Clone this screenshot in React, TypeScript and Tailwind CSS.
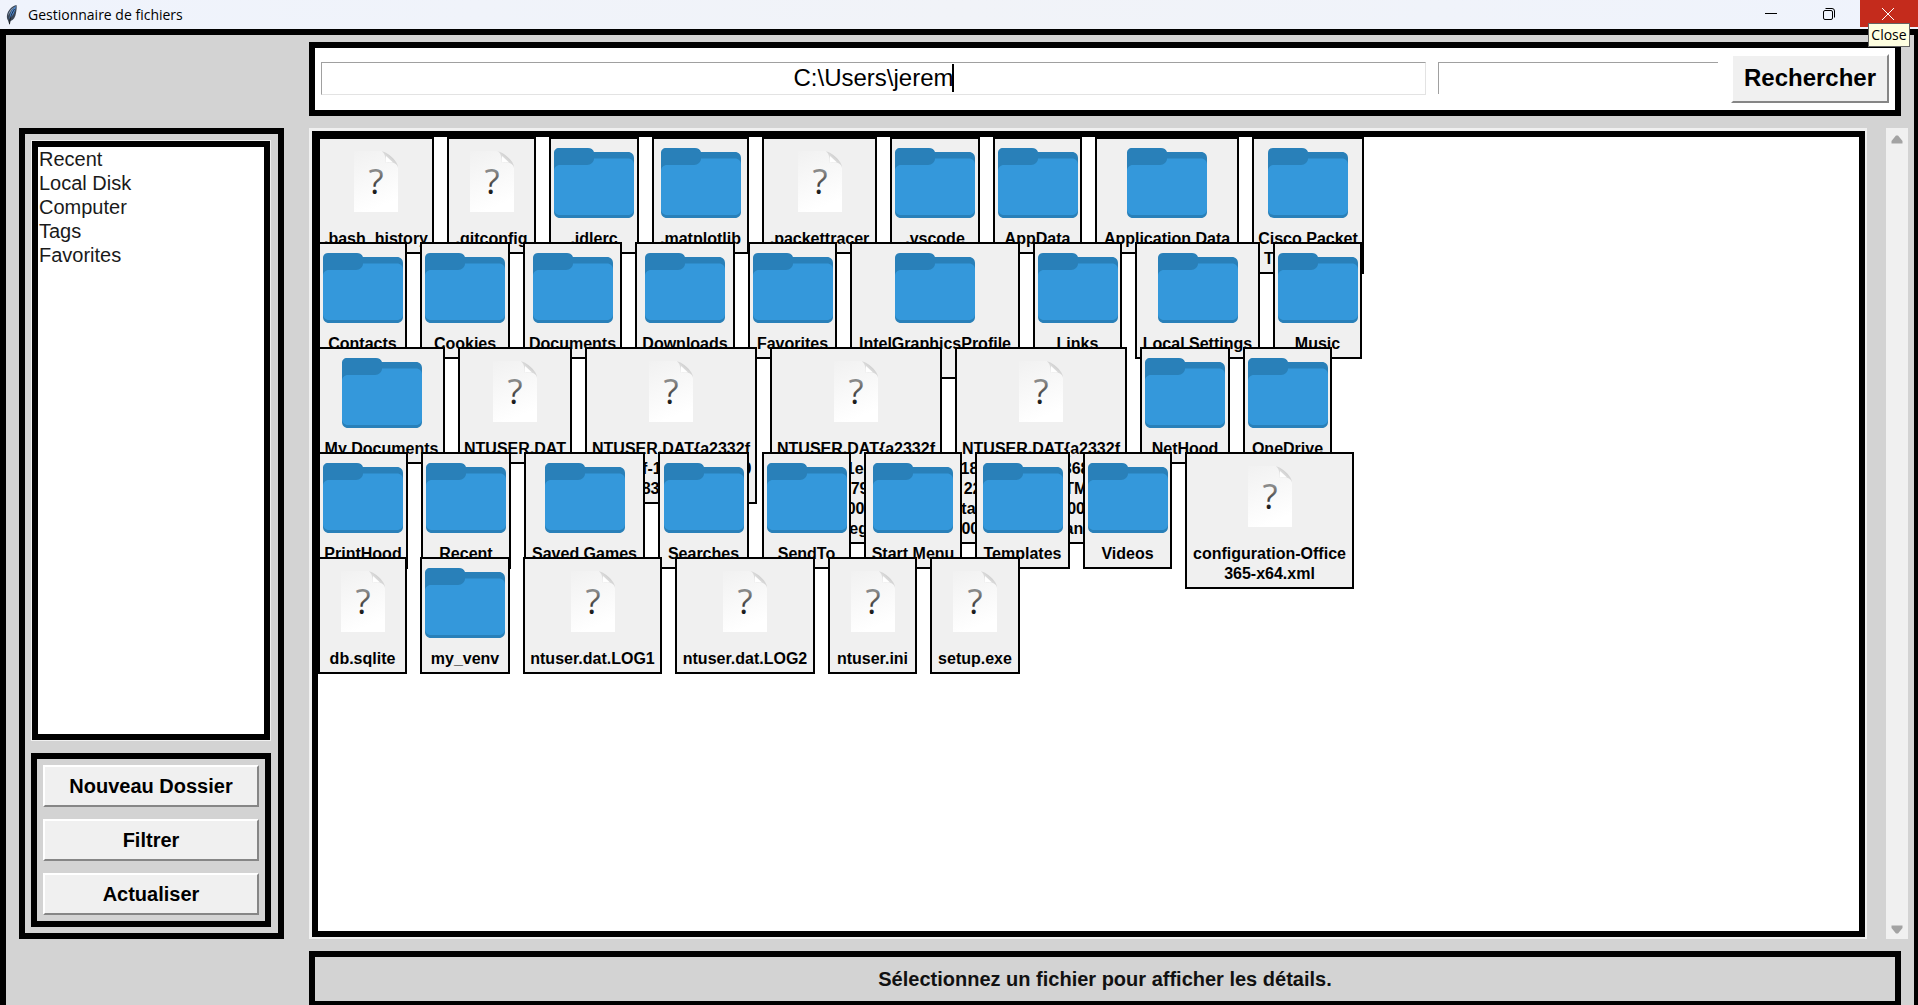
import React, { useState } from "react";

type Kind = "file" | "folder";
type Entry = { kind: Kind; lines: string[]; width: number };

const file = (width: number, ...lines: string[]): Entry => ({ kind: "file", lines, width });
const folder = (width: number, ...lines: string[]): Entry => ({ kind: "folder", lines, width });

const ROWS: Entry[][] = [
  [
    file(116, ".bash_history"),
    file(89, ".gitconfig"),
    folder(90, ".idlerc"),
    folder(97, ".matplotlib"),
    file(115, ".packettracer"),
    folder(90, ".vscode"),
    folder(89, "AppData"),
    folder(144, "Application Data"),
    folder(112, "Cisco Packet", "Tracer 8.2.1"),
  ],
  [
    folder(89, "Contacts"),
    folder(90, "Cookies"),
    folder(99, "Documents"),
    folder(100, "Downloads"),
    folder(89, "Favorites"),
    folder(170, "IntelGraphicsProfile", "s"),
    folder(89, "Links"),
    folder(125, "Local Settings"),
    folder(89, "Music"),
  ],
  [
    folder(127, "My Documents"),
    file(114, "NTUSER.DAT"),
    file(172, "NTUSER.DAT{a2332f", "18-cdbf-11ec-8680-00", "2248483d79}.TM.blf"),
    file(
      172,
      "NTUSER.DAT{a2332f",
      "18-cdbf-11ec-8680-00",
      "2248483d79}.TMCon",
      "tainer0000000000000",
      "0000001.regtrans-ms",
    ),
    file(
      172,
      "NTUSER.DAT{a2332f",
      "18-cdbf-11ec-8680-00",
      "2248483d79}.TMCon",
      "tainer0000000000000",
      "0000002.regtrans-ms",
    ),
    folder(90, "NetHood"),
    folder(89, "OneDrive"),
  ],
  [
    folder(90, "PrintHood"),
    folder(90, "Recent"),
    folder(121, "Saved Games"),
    folder(91, "Searches"),
    folder(89, "SendTo"),
    folder(98, "Start Menu"),
    folder(95, "Templates"),
    folder(89, "Videos"),
    file(169, "configuration-Office", "365-x64.xml"),
  ],
  [
    file(89, "db.sqlite"),
    folder(90, "my_venv"),
    file(139, "ntuser.dat.LOG1"),
    file(140, "ntuser.dat.LOG2"),
    file(89, "ntuser.ini"),
    file(90, "setup.exe"),
  ],
];

const PLACES = ["Recent", "Local Disk", "Computer", "Tags", "Favorites"];
const ACTIONS = ["Nouveau Dossier", "Filtrer", "Actualiser"];

function FolderIcon() {
  return (
    <svg viewBox="0 0 80 80" className="size-20 shrink-0" aria-hidden="true">
      <path
        d="M5 6h29c3 0 5 1.500 6 4h34c3.500 0 6 2.500 6 6v54c0 3.500-2.500 6-6 6H6c-3.500 0-6-2.500-6-6V11c0-3 2-5 5-5z"
        fill="#2980b9"
      />
      <path
        d="M6 23h27c4 0 7-3 7-6.500h34c3.500 0 6 2.500 6 6V67c0 3.500-2.500 6-6 6H6c-3.500 0-6-2.500-6-6V29c0-3.500 2.500-6 6-6z"
        fill="#3498db"
      />
    </svg>
  );
}

function FileIcon() {
  return (
    <svg viewBox="0 0 80 80" className="size-20 shrink-0" aria-hidden="true">
      <defs>
        <linearGradient id="sheet" x1="0" y1="0" x2="0.300" y2="1">
          <stop offset="0" stopColor="#f1f1f1" />
          <stop offset="1" stopColor="#ffffff" />
        </linearGradient>
        <linearGradient id="fold" x1="1" y1="0" x2="0" y2="1">
          <stop offset="0.350" stopColor="#cfcfcf" />
          <stop offset="0.600" stopColor="#e8e8e8" />
          <stop offset="1" stopColor="#ffffff" />
        </linearGradient>
        <linearGradient id="mark" x1="0" y1="0" x2="0" y2="1">
          <stop offset="0.300" stopColor="#8a8a8a" />
          <stop offset="0.800" stopColor="#111111" />
        </linearGradient>
      </defs>
      <path d="M18 9h28c6 2 13 9 16 16v45H18z" fill="url(#sheet)" />
      <path d="M44 9c4 0 6 5 5.500 12 5-2 12 0 12.500 5 1-6-11-17-18-17z" fill="url(#fold)" />
      <path d="M50 14v6.500c3-.6 5-.6 7 .1z" fill="#ffffff" />
      <text
        x="40"
        y="52"
        textAnchor="middle"
        fontSize="35"
        fontWeight="400"
        fill="url(#mark)"
        fontFamily="'Open Sans', 'Noto Sans', sans-serif"
      >
        ?
      </text>
    </svg>
  );
}

function FeatherIcon() {
  return (
    <svg viewBox="0 0 12 20" className="h-5 w-3" aria-hidden="true">
      <path d="M10.500 0C6 1 2 5 1 10c-.3 2 0 4 1 5.500L3.500 20l1-4c3-1 5-4 5.500-8 .5-3 1-6 .5-8z" fill="#3a4656" />
      <path d="M10 1C7 3 4 7 3.500 14c3-3 5.500-7 6.500-13z" fill="#4f8fdc" />
      <path d="M9 1.500C5 3.500 2.500 7 2 11c2-4 4-7 7-9.500z" fill="#8fa3bb" />
      <path d="M8.500 4C6 8 4 12 3.500 19" stroke="#111" strokeWidth="0.8" fill="none" />
    </svg>
  );
}

function TitleBar() {
  return (
    <header className="flex h-[29px] shrink-0 items-start justify-between bg-linear-to-r from-[#eff3fc] via-[#f1f3f8] to-[#eff3fc]">
      <div className="flex h-[29px] items-center gap-[10px] pl-[6px]">
        <FeatherIcon />
        <h1 className="font-['Open_Sans','Noto_Sans',sans-serif] text-[14px] leading-5 text-black">
          Gestionnaire de fichiers
        </h1>
      </div>
      <div className="flex">
        <button
          type="button"
          aria-label="Minimize"
          className="flex h-[27px] w-[58px] items-center justify-center pr-1"
        >
          <svg viewBox="0 0 12 12" className="size-3" aria-hidden="true">
            <path d="M0 5.500h12" stroke="#000" />
          </svg>
        </button>
        <button
          type="button"
          aria-label="Restore"
          className="flex h-[27px] w-[58px] items-center justify-center pr-1"
        >
          <svg viewBox="0 0 12 12" className="size-3" fill="none" stroke="#000" aria-hidden="true">
            <rect x="0.500" y="2.500" width="9" height="9" rx="1.500" />
            <path d="M2.500 .5H9A2.500 2.500 0 0 1 11.500 3v6.500" />
          </svg>
        </button>
        <div className="relative">
          <button
            type="button"
            aria-label="Close"
            className="flex h-[27px] w-[58px] items-center justify-center bg-[#c42b1c] pr-0.5"
          >
            <svg viewBox="0 0 12 12" className="size-3" aria-hidden="true">
              <path d="M0 0l12 12M12 0L0 12" stroke="#fff" />
            </svg>
          </button>
          <div
            role="tooltip"
            className="absolute top-[23px] right-2 z-10 flex h-6 w-[42px] items-center justify-center border border-[#646464] bg-[#ffffe1] font-['Open_Sans','Noto_Sans',sans-serif] text-[14px] leading-5 text-black"
          >
            Close
          </div>
        </div>
      </div>
    </header>
  );
}

const raised =
  "border-2 border-t-white border-l-white border-r-[#868686] border-b-[#868686] bg-[#f0f0f0] font-bold text-black";

function SearchBar() {
  const [path, setPath] = useState("C:\\Users\\jerem");
  return (
    <form
      onSubmit={(e) => e.preventDefault()}
      className="mr-[7px] flex h-[74px] items-center border-6 border-black bg-white px-[6px] pb-0.5"
    >
      <div className="relative mr-3 flex-1">
        <input
          aria-label="Chemin"
          value={path}
          onChange={(e) => setPath(e.target.value)}
          className="block h-[33px] w-full border border-t-[#a0a0a0] border-r-[#e3e3e3] border-b-[#e3e3e3] border-l-[#a0a0a0] text-center text-[24px] leading-7 text-black outline-none"
        />
        <div className="pointer-events-none absolute inset-0 flex items-center justify-center text-[24px]" aria-hidden="true">
          <span className="relative h-7">
            <span className="invisible">{path}</span>
            <span className="absolute top-0 right-0 h-7 w-0.5 bg-black" />
          </span>
        </div>
      </div>
      <input
        aria-label="Recherche"
        className="mr-[13px] h-8 w-[280px] border-t border-l border-[#a0a0a0] px-1 text-[24px] text-black outline-none"
      />
      <button
        type="submit"
        className={`${raised} h-[49px] w-[158px] border-t-[#f4f4f4] border-l-[#f4f4f4] text-[24px] leading-7`}
      >
        Rechercher
      </button>
    </form>
  );
}

function Sidebar() {
  return (
    <aside className="row-start-2 flex flex-col gap-3 border-6 border-black p-[6px] pr-[7px]">
      <div className="flex-1 border border-[#f0f0f0]">
        <ul className="h-full border-6 border-black bg-white pl-px text-[20px] leading-6 text-[#1a1a1a]">
          {PLACES.map((p) => (
            <li key={p}>
              <a href="#">{p}</a>
            </li>
          ))}
        </ul>
      </div>
      <div className="flex flex-col gap-3 border-6 border-black p-[6px]">
        {ACTIONS.map((a) => (
          <button key={a} type="button" className={`${raised} h-[42px] text-[20px] leading-6`}>
            {a}
          </button>
        ))}
      </div>
    </aside>
  );
}

function Tile({ entry }: { entry: Entry }) {
  return (
    <button
      type="button"
      style={{ width: entry.width }}
      className="flex shrink-0 flex-col items-center border-2 border-black bg-[#f0f0f0] py-[3px] text-[16px] leading-5 font-bold text-black"
    >
      {entry.kind === "folder" ? <FolderIcon /> : <FileIcon />}
      <span className="mt-[7px] flex flex-col items-center whitespace-nowrap">
        {entry.lines.map((line, i) => (
          <span key={i}>{line}</span>
        ))}
      </span>
    </button>
  );
}

function FileCanvas() {
  return (
    <div className="flex min-w-0 gap-[19px]">
      <section
        aria-label="Fichiers"
        className="min-w-0 flex-1 border-2 border-t-3 border-l-3 border-[#f0f0f0]"
      >
        <div className="h-full overflow-hidden border-6 border-black bg-white">
          {ROWS.map((row, i) => (
            <div key={i} className="isolate flex h-[105px] items-start gap-[13px]">
              {row.map((entry, j) => (
                <Tile key={j} entry={entry} />
              ))}
            </div>
          ))}
        </div>
      </section>
      <div className="flex w-[22px] flex-col items-center justify-between bg-[#f0f0f0]">
        <button type="button" aria-label="Défiler vers le haut" className="flex h-[22px] w-full items-center justify-center">
          <svg viewBox="0 0 12 9" className="h-[9px] w-3" aria-hidden="true">
            <path d="M5 .5h2l4.500 5.500v2.500H.5V6z" fill="#a3a3a3" />
          </svg>
        </button>
        <button type="button" aria-label="Défiler vers le bas" className="flex h-[20px] w-full items-center justify-center">
          <svg viewBox="0 0 12 9" className="h-[9px] w-3" aria-hidden="true">
            <path d="M.5.5h11V3L7 8.500H5L.5 3z" fill="#a3a3a3" />
          </svg>
        </button>
      </div>
    </div>
  );
}

export default function App() {
  return (
    <div className="flex h-screen flex-col overflow-hidden bg-[#d3d3d3] font-['Liberation_Sans',Arial,sans-serif]">
      <TitleBar />
      <main className="grid min-h-0 flex-1 grid-cols-[265px_minmax(0,1fr)] grid-rows-[74px_minmax(0,1fr)_54px] gap-x-[25px] gap-y-3 border-t-6 border-r-4 border-l-6 border-black pt-[7px] pr-[6px] pl-[13px]">
        <div className="col-start-2">
          <SearchBar />
        </div>
        <Sidebar />
        <FileCanvas />
        <footer className="col-start-2 mr-[7px] flex items-center justify-center border-6 border-b-4 border-black text-[20px] leading-6 font-bold text-[#111]">
          Sélectionnez un fichier pour afficher les détails.
        </footer>
      </main>
    </div>
  );
}
